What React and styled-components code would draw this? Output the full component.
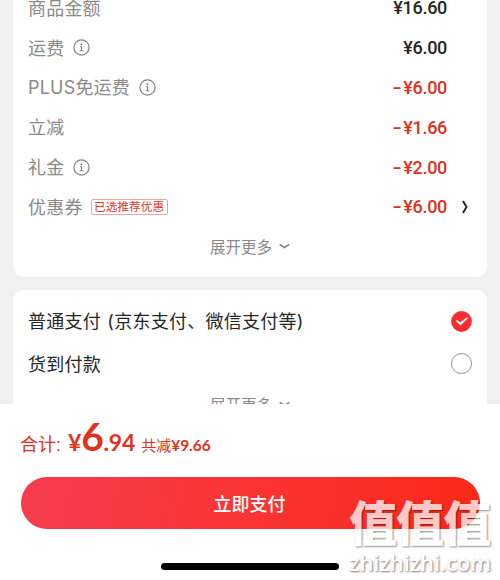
import { Fragment } from "react";
import styled, { createGlobalStyle } from "styled-components";

const GlobalStyle = createGlobalStyle`
  * {
    box-sizing: border-box;
  }
  body {
    margin: 0;
    background-color: #f0f0f0;
    font-family: "Liberation Sans", "Noto Sans CJK SC", sans-serif;
  }
`;

const Page = styled.div`
  position: relative;
  display: flex;
  flex-direction: column;
  width: 500px;
  height: 580px;
  overflow: hidden;
  background-color: #f0f0f0;
`;

const Content = styled.main`
  display: flex;
  flex-direction: column;
  gap: 13px;
  height: 404px;
  padding: 0 13px;
  overflow: hidden;
`;

const Card = styled.section`
  flex-shrink: 0;
  height: ${(props) => props.$height}px;
  margin-top: ${(props) => props.$scrolled || 0}px;
  padding: ${(props) => props.$padding || "0"};
  border-radius: 11px;
  background-color: #fff;
`;

const PriceRow = styled.div`
  display: flex;
  align-items: center;
  height: 39.8px;
  padding: 0 15px;
`;

const Label = styled.span`
  padding-top: 2px;
  font-family: Inter, "Noto Sans CJK SC", sans-serif;
  font-size: 18px;
  font-weight: 400;
  line-height: 24px;
  letter-spacing: 0.2px;
  color: #8a8a8a;
`;

const Tag = styled.span`
  display: flex;
  align-items: center;
  justify-content: center;
  width: 77px;
  height: 16px;
  margin-left: 8px;
  border: 1px solid #eba79f;
  border-radius: 2px;
  font-size: 11.7px;
  line-height: 14px;
  color: #d93a2c;
  white-space: nowrap;
`;

const Amount = styled.span`
  margin-left: auto;
  margin-right: 9px;
  font-family: Roboto, sans-serif;
  font-size: 18px;
  font-weight: 500;
  letter-spacing: -0.3px;
  color: ${(props) => (props.$minus ? "#e0301e" : "#262626")};
`;

const Minus = styled.span`
  display: inline-block;
  margin-right: 3px;
  transform: scaleX(1.5);
`;

const ArrowSlot = styled.span`
  display: flex;
  justify-content: flex-end;
  width: 16px;
  padding-right: 4px;
`;

const InfoSvg = styled.svg`
  display: block;
  margin-left: 8.5px;
`;

const MoreRow = styled.div`
  display: flex;
  align-items: center;
  justify-content: center;
  gap: 7px;
  height: 38px;
  font-size: 15.5px;
  color: #8a8a8a;
`;

const PayRow = styled.label`
  display: flex;
  align-items: center;
  justify-content: space-between;
  height: 42.5px;
  padding: 0 15px;
  font-family: Inter, "Noto Sans CJK SC", sans-serif;
  font-size: 18px;
  letter-spacing: 0.25px;
  word-spacing: 1px;
  color: #262626;
`;

const PayName = styled.span`
  margin-bottom: 2px;
`;

const Footer = styled.footer`
  display: flex;
  flex-direction: column;
  align-items: center;
  height: 176px;
  background-color: #fff;
`;

const Total = styled.div`
  display: flex;
  align-items: baseline;
  width: 100%;
  height: 73px;
  padding: 9px 20px 0;
  line-height: 46px;
  color: #e1321f;
`;

const TotalLabel = styled.span`
  width: 48px;
  font-size: 18px;
`;

const Num = styled.span`
  font-family: Lato, sans-serif;
  font-size: ${(props) => props.$size}px;
  font-weight: 700;
  letter-spacing: ${(props) => props.$spacing || 0}px;
`;

const Saved = styled.span`
  margin-left: 6px;
  font-size: 15px;
`;

const PayButton = styled.button`
  width: 459px;
  height: 52px;
  padding: 0 1px 1px 0;
  border: 0;
  border-radius: 26px;
  background: linear-gradient(100deg, #f53d4f 0%, #fa3433 50%, #fb2817 100%);
  font-family: inherit;
  font-size: 18px;
  font-weight: 500;
  color: #fff;
`;

const HomeBar = styled.div`
  width: 178px;
  height: 7px;
  margin-top: 34px;
  border-radius: 4px;
  background-color: #000;
`;

const Watermark = styled.div`
  position: absolute;
  left: 349px;
  top: 496px;
  width: 144px;
  opacity: 0.74;
  color: #fff;
  pointer-events: none;
  white-space: nowrap;
`;

const MarkName = styled.div`
  height: 55px;
  font-family: "Noto Sans CJK SC", sans-serif;
  font-size: 48px;
  font-weight: 900;
  line-height: 49px;
  letter-spacing: -0.9px;
  text-shadow: 1px 1px 2px rgba(0, 0, 0, 0.6);
`;

const MarkSite = styled.div`
  font-family: "Open Sans", sans-serif;
  font-size: 22px;
  font-weight: 600;
  line-height: 22px;
  letter-spacing: -0.1px;
  text-shadow: 1px 1px 2px rgba(0, 0, 0, 0.7);
`;

const prices = [
  { label: "商品金额", amount: "¥16.60" },
  { label: "运费", amount: "¥6.00", info: true },
  { label: "PLUS免运费", amount: "¥6.00", minus: true, info: true },
  { label: "立减", amount: "¥1.66", minus: true },
  { label: "礼金", amount: "¥2.00", minus: true, info: true },
  {
    label: "优惠券",
    amount: "¥6.00",
    minus: true,
    tag: "已选推荐优惠",
    arrow: true,
  },
];

function InfoIcon() {
  return (
    <InfoSvg width="17" height="17" viewBox="0 0 17 17" fill="none">
      <circle cx="8.5" cy="8.5" r="7.6" stroke="#808080" strokeWidth="1.2" />
      <circle cx="8.3" cy="5.2" r="1" fill="#808080" />
      <path
        d="M7 7.7h1.5v4M6.7 11.8h3.6"
        stroke="#808080"
        strokeWidth="1.1"
      />
    </InfoSvg>
  );
}

function RightArrow() {
  return (
    <svg width="6" height="14" viewBox="0 0 6 14" fill="none">
      <path d="M1 1L4.5 7L1 13" stroke="#222" strokeWidth="1.9" />
    </svg>
  );
}

function More() {
  return (
    <MoreRow>
      展开更多
      <svg width="11" height="6" viewBox="0 0 11 6" fill="none">
        <path d="M0.7 1.4L5.5 4.5L10.3 1.4" stroke="#808080" strokeWidth="1.5" />
      </svg>
    </MoreRow>
  );
}

function Radio({ checked }) {
  return (
    <svg width="21" height="21" viewBox="0 0 21 21" fill="none">
      {checked ? (
        <Fragment>
          <circle cx="10.5" cy="10.5" r="10.4" fill="#f92d30" />
          <path
            d="M4.6 9.8L6.4 9.3L9.2 11.5L15.6 6.6L17.2 7L9.4 14.6Z"
            fill="#fff"
          />
        </Fragment>
      ) : (
        <circle cx="10.5" cy="10.5" r="10" stroke="#858585" strokeWidth="0.9" />
      )}
    </svg>
  );
}

function App() {
  return (
    <Page>
      <GlobalStyle />
      <Content>
        <Card $height={289} $scrolled={-12}>
          {prices.map((item) => (
            <PriceRow key={item.label}>
              <Label>{item.label}</Label>
              {item.info && <InfoIcon />}
              {item.tag && <Tag>{item.tag}</Tag>}
              <Amount $minus={item.minus}>
                {item.minus && <Minus>-</Minus>}
                {item.amount}
              </Amount>
              <ArrowSlot>{item.arrow && <RightArrow />}</ArrowSlot>
            </PriceRow>
          ))}
          <More />
        </Card>
        <Card $height={150} $padding="10px 0 0">
          <PayRow>
            <PayName>普通支付 (京东支付、微信支付等)</PayName>
            <Radio checked />
          </PayRow>
          <PayRow>
            <PayName>货到付款</PayName>
            <Radio />
          </PayRow>
          <More />
        </Card>
      </Content>
      <Footer>
        <Total>
          <TotalLabel>合计:</TotalLabel>
          <Num $size={23}>¥</Num>
          <Num $size={39} $spacing={-0.4}>
            6
          </Num>
          <Num $size={23} $spacing={-0.2}>
            .94
          </Num>
          <Saved>
            共减
            <Num $size={15.5}>¥9.66</Num>
          </Saved>
        </Total>
        <PayButton>立即支付</PayButton>
        <HomeBar />
      </Footer>
      <Watermark>
        <MarkName>值值值</MarkName>
        <MarkSite>zhizhizhi.com</MarkSite>
      </Watermark>
    </Page>
  );
}

export default App;
